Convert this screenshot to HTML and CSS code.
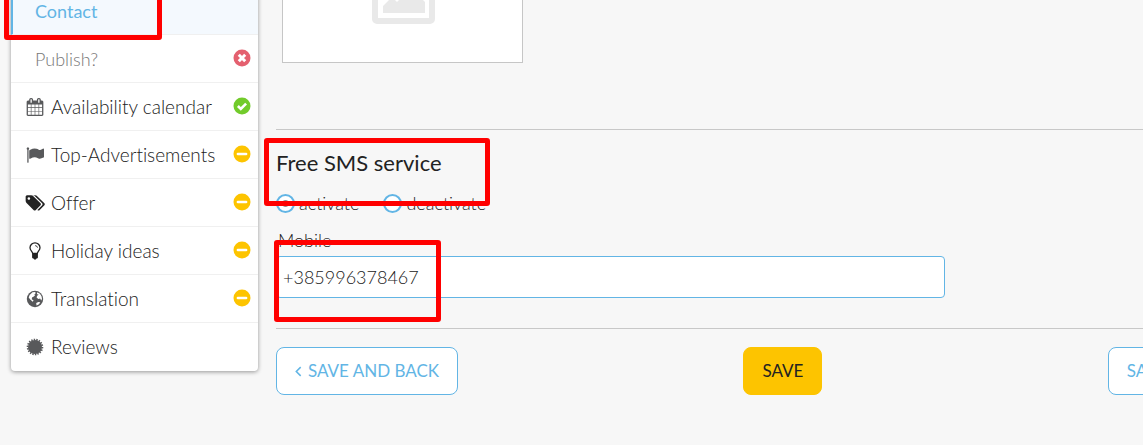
FILE: index.html
```html
<!DOCTYPE html>
<html lang="en">
<head>
<meta charset="utf-8">
<title>Contact</title>
<link rel="stylesheet" href="styles.css">
</head>
<body>
<svg class="sprite" aria-hidden="true">
  <symbol id="minus" viewBox="0 0 18 18"><circle cx="9" cy="9" r="8.5" fill="#fdc400"/><path d="M4.9 9h8.2" stroke="#fff" stroke-width="2.6" stroke-linecap="round"/></symbol>
</svg>
<div class="page">
  <nav class="sidebar">
    <a class="item sub active" href="#"><span class="label">Contact</span></a>
    <a class="item sub" href="#"><span class="label">Publish?</span>
      <svg class="status" viewBox="0 0 18 18"><circle cx="9" cy="9" r="8.5" fill="#e4606f"/><path d="M5.800 5.800l6.400 6.400M12.200 5.800l-6.400 6.400" stroke="#fff" stroke-width="3"/></svg></a>
    <a class="item" href="#">
      <svg class="icon" viewBox="0 0 1792 1792"><path fill="#58595b" d="M192 1664h288v-288h-288v288zm352 0h320v-288h-320v288zm-352-352h288v-320h-288v320zm352 0h320v-320h-320v320zm-352-384h288v-288h-288v288zm736 736h320v-288h-320v288zm-384-736h320v-288h-320v288zm768 736h288v-288h-288v288zm-384-352h320v-320h-320v320zm-352-864v-288q0-13-9.5-22.5t-22.5-9.5h-64q-13 0-22.5 9.5t-9.5 22.5v288q0 13 9.5 22.5t22.5 9.5h64q13 0 22.5-9.5t9.5-22.5zm736 864h288v-320h-288v320zm-384-384h320v-288h-320v288zm384 0h288v-288h-288v288zm32-480v-288q0-13-9.5-22.5t-22.5-9.5h-64q-13 0-22.5 9.5t-9.5 22.5v288q0 13 9.5 22.5t22.5 9.5h64q13 0 22.5-9.5t9.5-22.5zm384-64v1280q0 52-38 90t-90 38h-1408q-52 0-90-38t-38-90v-1280q0-52 38-90t90-38h128v-96q0-66 47-113t113-47h64q66 0 113 47t47 113v96h384v-96q0-66 47-113t113-47h64q66 0 113 47t47 113v96h128q52 0 90 38t38 90z"/></svg>
      <span class="label">Availability calendar</span>
      <svg class="status" viewBox="0 0 18 18"><circle cx="9" cy="9" r="8.5" fill="#72cb2b"/><path d="M4.9 9l2.9 2.9 5.3-5.3" fill="none" stroke="#fff" stroke-width="2.6"/></svg></a>
    <a class="item" href="#">
      <svg class="icon" viewBox="0 0 1792 1792"><path fill="#58595b" d="M320 256q0 72-64 110v1266q0 13-9.500 22.500t-22.500 9.500h-64q-13 0-22.500-9.500t-9.500-22.500v-1266q-64-38-64-110 0-53 37.500-90.500t90.500-37.500 90.500 37.500 37.500 90.500zm1472 64v763q0 25-12.500 38.500t-39.500 27.500q-215 116-369 116-61 0-123.500-22t-108.500-48-115.500-48-142.500-22q-192 0-464 146-17 9-33 9-26 0-45-19t-19-45v-742q0-32 31-55 21-14 79-43 236-120 421-120 107 0 200 29t219 88q38 19 88 19 54 0 117.500-21t110-47 88-47 54.500-21q26 0 45 19t19 45z"/></svg>
      <span class="label">Top-Advertisements</span>
      <svg class="status"><use href="#minus"/></svg></a>
    <a class="item" href="#">
      <svg class="icon wide" viewBox="64 128 1984 1536"><path fill="#222" d="M576 448q0-53-37.500-90.500t-90.500-37.500-90.500 37.500-37.500 90.500 37.500 90.500 90.500 37.500 90.500-37.500 37.500-90.500zm1067 576q0 53-37 90l-491 492q-39 37-91 37-53 0-90-37l-715-716q-38-37-64.500-101t-26.500-117v-416q0-52 38-90t90-38h416q53 0 117 26.500t102 64.500l715 714q37 39 37 91zm384 0q0 53-37 90l-491 492q-39 37-91 37-36 0-59-14t-53-45l470-470q37-37 37-90 0-52-37-91l-715-714q-38-38-102-64.500t-117-26.500h224q53 0 117 26.500t102 64.500l715 714q37 39 37 91z"/></svg>
      <span class="label">Offer</span>
      <svg class="status"><use href="#minus"/></svg></a>
    <a class="item" href="#">
      <svg class="icon" viewBox="0 0 18 18"><path d="M6.700 11.500C6.500 9.500 4 8.500 4 5.800a5 5 0 0 1 10 0c0 2.700-2.500 3.700-2.700 5.700z" fill="none" stroke="#222" stroke-width="1.300"/><path d="M9.200 3.600q2 .2 2.300 2" fill="none" stroke="#222" stroke-width=".9"/><path d="M6.100 11.400h5.800v4q0 .8-1.400 1l-.6 1H8.100l-.6-1q-1.400-.2-1.400-1z" fill="#222"/></svg>
      <span class="label">Holiday ideas</span>
      <svg class="status"><use href="#minus"/></svg></a>
    <a class="item" href="#">
      <svg class="icon" viewBox="0 0 18 18"><circle cx="9" cy="9" r="8.200" fill="#58595b"/><path d="M6.500 2.200L9 1.900l.8 1L8.400 4.400 9 5.600 7.400 6.800 6 7.600 5.800 9.300 7.600 10.600 6.700 11.700 4.200 9.500 2.700 7.600 3.600 5zM11.300 2.300l2.600 1.400 1.600 2.500.5 2.600-.7 1.600-1.200-1.900-1.800.4-1.700-1.500.5-1.700 1.500-.9-1.700-.7zM10.200 13l2.200-1 1.900.2-1.300 2-2.500 1.300z" fill="#fff"/></svg>
      <span class="label">Translation</span>
      <svg class="status"><use href="#minus"/></svg></a>
    <a class="item" href="#">
      <svg class="icon" viewBox="0 0 18 18"><circle cx="9" cy="9" r="7" fill="#58595b"/><circle cx="9" cy="9" r="7.300" fill="none" stroke="#58595b" stroke-width="2" pathLength="36" stroke-dasharray="1.100 .9"/></svg>
      <span class="label">Reviews</span></a>
  </nav>
  <main class="content">
    <div class="photo">
      <svg class="placeholder" viewBox="0 0 63 53"><rect x="3" y="3" width="57" height="47" rx="2" fill="none" stroke="#e9e9e9" stroke-width="6"/><circle cx="18" cy="17" r="6" fill="#e9e9e9"/><path d="M11 42v-7l9-9 5 5 14-14 14 14v11z" fill="#e9e9e9"/></svg>
    </div>
    <form class="sms">
      <h2 class="title">Free SMS service</h2>
      <div class="choices">
        <label class="choice"><input class="radio" type="radio" name="sms" checked>activate</label>
        <label class="choice"><input class="radio" type="radio" name="sms">deactivate</label>
      </div>
      <label class="field-label" for="mobile">Mobile</label>
      <input class="field" id="mobile" type="text" value="+385996378467">
    </form>
    <div class="actions">
      <button class="btn" type="button"><svg class="chevron" viewBox="0 0 6 10"><path d="M5 1L1 5l4 4" fill="none" stroke="currentColor" stroke-width="1.400"/></svg>SAVE AND BACK</button>
      <button class="btn primary" type="button">SAVE</button>
      <button class="btn" type="button">SAVE AND NEXT<svg class="chevron" viewBox="0 0 6 10"><path d="M1 1l4 4-4 4" fill="none" stroke="currentColor" stroke-width="1.400"/></svg></button>
    </div>
  </main>
</div>
<div class="mark mark-contact"></div>
<div class="mark mark-title"></div>
<div class="mark mark-mobile"></div>
</body>
</html>
```
FILE: styles.css
```css
* { box-sizing: border-box; }
body {
  margin: 0;
  position: relative;
  overflow: hidden;
  background: #f7f7f7;
  color: #222;
  font: 300 18px/24px Lato, "Open Sans", sans-serif;
  font-variant-ligatures: none;
}
.sprite { position: absolute; width: 0; height: 0; }
/* The page is scrolled: its top and right edges lie outside the window. */
.page {
  display: flex;
  align-items: flex-start;
  gap: 18px;
  margin: -13px -146px 0 11px;
  padding-bottom: 50px;
}
.sidebar {
  flex: 0 0 247px;
  background: #fff;
  border-radius: 4px;
  box-shadow: 0 1px 4px rgba(0, 0, 0, .4);
  overflow: hidden;
}
.item {
  display: flex;
  align-items: center;
  height: 48px;
  padding: 0 7px 0 14px;
  border-bottom: 1px solid #f0f0f0;
  color: #222;
  font-size: 19px;
  text-decoration: none;
}
.item:last-child { border-bottom: 0; }
.sub { padding-left: 24px; color: #777; font-size: 18px; }
.active {
  padding-left: 22px;
  border-left: 2px solid #62b5e5;
  background: #f4f9fe;
  color: #62b5e5;
  font-weight: 400;
}
.icon { flex: none; width: 20px; height: 18px; margin-right: 6px; }
.wide { height: 16px; }
.label { flex: 1; white-space: nowrap; }
.status { flex: none; width: 18px; height: 18px; margin-bottom: 1px; }
.content { flex: 1; min-width: 0; }
.photo {
  display: flex;
  justify-content: center;
  align-items: flex-start;
  width: 241px;
  height: 76px;
  margin-left: 6px;
  padding-left: 2px;
  background: #fff;
  border: 1px solid #c6c6c6;
  border-top: 0;
}
.placeholder { width: 63px; height: 53px; margin-top: -16px; }
.sms {
  margin-top: 66px;
  padding: 21px 0 30px;
  border: 1px solid #c8c8c8;
  border-width: 1px 0;
}
.title { margin: 0; font-size: 22px; line-height: 24px; font-weight: 400; }
.choices { display: flex; gap: 24px; margin-top: 16px; }
.choice { display: flex; align-items: center; gap: 4px; }
.radio {
  appearance: none;
  width: 19px;
  height: 19px;
  margin: 0;
  border: 2px solid #62b5e5;
  border-radius: 50%;
  background: #fff;
}
.radio:checked { background: radial-gradient(circle, #222 0 2px, #fff 4px); }
.field-label { display: block; margin: 13px 0 4px 2px; }
.field {
  display: block;
  width: 66%;
  height: 42px;
  padding: 0 6px;
  background: #fff;
  border: 1px solid #62b5e5;
  border-radius: 4px;
  color: #222;
  font: inherit;
}
.actions { display: flex; justify-content: space-between; margin-top: 18px; }
.btn {
  display: flex;
  align-items: center;
  gap: 6px;
  height: 48px;
  padding: 0 18px;
  background: #fff;
  border: 1px solid #62b5e5;
  border-radius: 8px;
  color: #62b5e5;
  font: 400 17px/24px Lato, "Open Sans", sans-serif;
  white-space: nowrap;
}
.primary { background: #fdc400; border-color: #fdc400; color: #222; }
.chevron { width: 7px; height: 11px; }
/* Highlight frames drawn over the page. */
.mark { position: absolute; border: 5px solid #f00; border-radius: 3px; }
.mark-contact { left: 4px; top: -5px; width: 158px; height: 45px; }
.mark-title { left: 264px; top: 138px; width: 226px; height: 68px; }
.mark-mobile { left: 274px; top: 240px; width: 167px; height: 82px; }
```
